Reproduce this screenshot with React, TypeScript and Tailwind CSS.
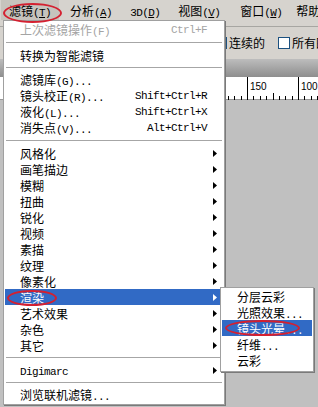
import React from "react";

const CJK = "font-['Noto_Sans_CJK_SC',sans-serif] text-[12px]";
const LAT = "font-['Liberation_Mono','Noto_Sans_CJK_SC',monospace] text-[11px] tracking-[-0.6px]";

// split a label into CJK / latin runs so latin gets the fixed 6px advance
function Txt({ s }: { s: string }) {
  const parts = s.split(/([\u2e80-\uffff]+)/).filter(Boolean);
  return (
    <>
      {parts.map((p, i) => (
        <span key={i} className={/[\u2e80-\uffff]/.test(p) ? CJK : LAT}>
          {p}
        </span>
      ))}
    </>
  );
}

function Arrow({ white }: { white?: boolean }) {
  return (
    <svg width="4" height="7" viewBox="0 0 4 7">
      <polygon points="0,0 4,3.5 0,7" fill={white ? "#ffffff" : "#000000"} />
    </svg>
  );
}

type Item =
  | { sep: true }
  | { label: string; key?: string; sub?: boolean; disabled?: boolean; active?: boolean };

const items: Item[] = [
  { label: "上次滤镜操作(F)", key: "Ctrl+F", disabled: true },
  { sep: true },
  { label: "转换为智能滤镜" },
  { sep: true },
  { label: "滤镜库(G)..." },
  { label: "镜头校正(R)...", key: "Shift+Ctrl+R" },
  { label: "液化(L)...", key: "Shift+Ctrl+X" },
  { label: "消失点(V)...", key: "Alt+Ctrl+V" },
  { sep: true },
  { label: "风格化", sub: true },
  { label: "画笔描边", sub: true },
  { label: "模糊", sub: true },
  { label: "扭曲", sub: true },
  { label: "锐化", sub: true },
  { label: "视频", sub: true },
  { label: "素描", sub: true },
  { label: "纹理", sub: true },
  { label: "像素化", sub: true },
  { label: "渲染", sub: true, active: true },
  { label: "艺术效果", sub: true },
  { label: "杂色", sub: true },
  { label: "其它", sub: true },
  { sep: true },
  { label: "Digimarc", sub: true },
  { sep: true },
  { label: "浏览联机滤镜..." },
];

const subItems = ["分层云彩", "光照效果...", "镜头光晕...", "纤维...", "云彩"];

function MenuBarItem({ name, k }: { name: string; k: string }) {
  return (
    <div className="px-[8px] leading-[20px] text-black whitespace-nowrap">
      <span className={CJK}>{name}</span>
      <span className={LAT}>
        (<span className="underline">{k}</span>)
      </span>
    </div>
  );
}

function Ruler() {
  const ticks = [];
  for (let i = -40; i < 60; i++) {
    const x = Math.round(247 + i * 6.375) + 0.5;
    const major = i % 8 === 0;
    const mid = i % 4 === 0;
    ticks.push(
      <line
        key={i}
        x1={x}
        x2={x}
        y1={major ? 0 : mid ? 16 : 19}
        y2={23}
        stroke="#000"
        strokeWidth="1"
        shapeRendering="crispEdges"
      />
    );
  }
  return (
    <svg width="318" height="23" className="block">
      {ticks}
    </svg>
  );
}

export default function App() {
  return (
    <div className="relative w-[318px] h-[407px] overflow-hidden bg-[#c0c0c0] select-none">
      {/* menu bar */}
      <div className="flex h-[20px] bg-[#d6d3ce] pl-[1px] whitespace-nowrap overflow-hidden">
        <div className="shrink-0 bg-[#c6c3bd]">
          <MenuBarItem name="滤镜" k="T" />
        </div>
        <div className="shrink-0 ml-[3px]">
          <MenuBarItem name="分析" k="A" />
        </div>
        <div className="shrink-0 ml-[2px] px-[8px] leading-[20px]">
          <span className={LAT}>
            3D(<span className="underline">D</span>)
          </span>
        </div>
        <div className="shrink-0 ml-[2px]">
          <MenuBarItem name="视图" k="V" />
        </div>
        <div className="shrink-0 ml-[4px]">
          <MenuBarItem name="窗口" k="W" />
        </div>
        <div className="shrink-0 pl-[6px] leading-[20px]">
          <span className={CJK}>帮助</span>
        </div>
      </div>

      {/* options bar */}
      <div className="h-[7px] bg-[#d6d3ce] border-b border-[#a7a6a2]" />
      <div className="h-[32px] bg-[#d6d3ce] flex items-center pl-[215px] gap-[2px] whitespace-nowrap overflow-hidden">
        <div className="shrink-0 w-[12px] h-[12px] bg-white border border-[#1c5180] flex items-center justify-center">
          <svg width="9" height="9" viewBox="0 0 9 9">
            <polyline points="1.5,4.5 3.5,6.5 7.5,2" fill="none" stroke="#21a121" strokeWidth="1.8" />
          </svg>
        </div>
        <span className={`${CJK} shrink-0`}>连续的</span>
        <div className="shrink-0 ml-[11px] w-[12px] h-[12px] bg-white border border-[#1c5180]" />
        <span className={`${CJK} shrink-0`}>所有图层</span>
      </div>

      {/* document tab bar */}
      <div className="h-[18px] bg-gradient-to-b from-[#bdbdbd] to-[#8e8e8e]" />

      {/* ruler */}
      <div className="relative h-[23px] bg-white border-b border-[#9a9a9a]">
        <Ruler />
        <span className="absolute left-[250px] top-[4px] font-['Liberation_Sans',sans-serif] text-[10px] leading-[12px]">150</span>
        <span className="absolute left-[301px] top-[4px] font-['Liberation_Sans',sans-serif] text-[10px] leading-[12px]">100</span>
      </div>

      {/* dropdown menu */}
      <div className="absolute left-[3px] top-[20px] w-[222px] bg-white border border-[#a0a0a0] p-[1px] shadow-[1px_1px_0_#7a7a7a]">
        {items.map((it, i) =>
          "sep" in it ? (
            <div key={i} className="h-[9px] flex items-center px-[1px]">
              <div className="w-full h-px bg-[#a6a6a6]" />
            </div>
          ) : (
            <div
              key={i}
              className={`h-[16px] flex items-center pl-[15px] whitespace-nowrap ${
                it.active ? "bg-[#316ac5] text-white" : it.disabled ? "text-[#a4a4a4]" : "text-black"
              }`}
            >
              <span className="flex-1 leading-[16px]">
                <Txt s={it.label} />
              </span>
              {it.key && <span className={`${LAT} leading-[16px]`}>{it.key}</span>}
              <span className="w-[16px] flex items-center justify-center">
                {it.sub && <Arrow white={it.active} />}
              </span>
            </div>
          )
        )}
      </div>

      {/* submenu */}
      <div className="absolute left-[220px] top-[287px] w-[94px] bg-white border border-[#a0a0a0] px-[1px] pb-[3px] shadow-[1px_1px_0_#7a7a7a]">
        {subItems.map((s, i) => (
          <div
            key={s}
            className={`h-[16px] leading-[16px] pl-[15px] whitespace-nowrap ${
              i === 2 ? "bg-[#316ac5] text-white" : "text-black"
            }`}
          >
            <Txt s={s} />
          </div>
        ))}
      </div>

      {/* red annotation ellipses */}
      <div className="absolute left-[3px] top-[3px] w-[59px] h-[20px] rounded-[50%] border-2 border-[#d42030]" />
      <div className="absolute left-[7px] top-[290px] w-[50px] h-[16px] rounded-[50%] border-2 border-[#d42030]" />
      <div className="absolute left-[225px] top-[320px] w-[75px] h-[16px] rounded-[50%] border-2 border-[#d42030]" />
    </div>
  );
}
